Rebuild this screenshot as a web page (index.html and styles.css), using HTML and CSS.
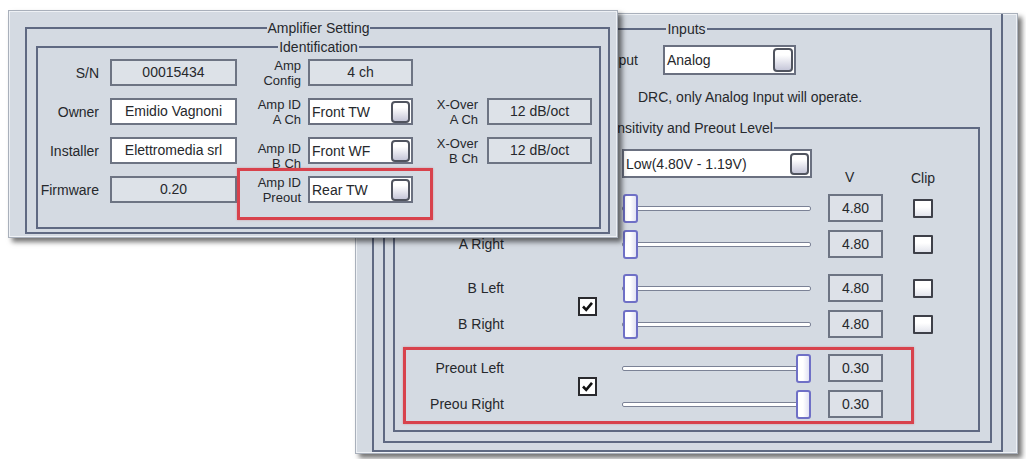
FILE: index.html
```html
<!DOCTYPE html>
<html>
<head>
<meta charset="utf-8">
<link rel="stylesheet" href="styles.css">
</head>
<body>
<div class="desk">

  <section class="win win-right">
    <div class="frame">
      <fieldset class="fs fs-inputs">
        <legend>Inputs</legend>
        <div class="input-row">
          <span class="in-lbl">Input</span>
          <div class="combo combo-analog"><span>Analog</span><i class="btn"></i></div>
        </div>
        <p class="note">DRC, only Analog Input will operate.</p>
        <fieldset class="fs fs-sens">
          <legend>Sensitivity and Preout Level</legend>
          <div class="sgrid head">
            <div class="combo combo-low"><span>Low(4.80V - 1.19V)</span><i class="btn"></i></div>
            <span class="hv">V</span>
            <span class="hclip">Clip</span>
          </div>

          <div class="sgrid group">
            <span class="rl">A Left</span>
            <span class="chk"><svg viewBox="0 0 15 15" width="15" height="15"><path d="M3 7.5 L6.2 10.8 L12 3.8" fill="none" stroke="#111" stroke-width="2.6"/></svg></span>
            <div class="slider"><i class="track"></i><i class="thumb"></i></div>
            <span class="val">4.80</span>
            <span class="clip"></span>
            <span class="rl">A Right</span>
            <div class="slider"><i class="track"></i><i class="thumb"></i></div>
            <span class="val">4.80</span>
            <span class="clip"></span>
          </div>

          <div class="sgrid group">
            <span class="rl">B Left</span>
            <span class="chk"><svg viewBox="0 0 15 15" width="15" height="15"><path d="M3 7.5 L6.2 10.8 L12 3.8" fill="none" stroke="#111" stroke-width="2.6"/></svg></span>
            <div class="slider"><i class="track"></i><i class="thumb"></i></div>
            <span class="val">4.80</span>
            <span class="clip"></span>
            <span class="rl">B Right</span>
            <div class="slider"><i class="track"></i><i class="thumb"></i></div>
            <span class="val">4.80</span>
            <span class="clip"></span>
          </div>

          <div class="sgrid group">
            <span class="rl">Preout Left</span>
            <span class="chk"><svg viewBox="0 0 15 15" width="15" height="15"><path d="M3 7.5 L6.2 10.8 L12 3.8" fill="none" stroke="#111" stroke-width="2.6"/></svg></span>
            <div class="slider"><i class="track"></i><i class="thumb end"></i></div>
            <span class="val">0.30</span>
            <span class="noclip"></span>
            <span class="rl">Preou Right</span>
            <div class="slider"><i class="track"></i><i class="thumb end"></i></div>
            <span class="val">0.30</span>
            <span class="noclip"></span>
          </div>
        </fieldset>
      </fieldset>
    </div>
    <div class="mark mark-right"></div>
  </section>

  <section class="win win-left">
    <fieldset class="fs fs-amp">
      <legend>Amplifier Setting</legend>
      <fieldset class="fs fs-id">
        <legend>Identification</legend>
        <div class="idgrid">
          <span class="l1">S/N</span>
          <span class="field ro">00015434</span>
          <span class="l2">Amp<br>Config</span>
          <span class="field ro">4 ch</span>
          <span></span><span></span>

          <span class="l1">Owner</span>
          <span class="field">Emidio Vagnoni</span>
          <span class="l2">Amp ID<br>A Ch</span>
          <div class="combo"><span>Front TW</span><i class="btn"></i></div>
          <span class="l3">X-Over<br>A Ch</span>
          <span class="field ro">12 dB/oct</span>

          <span class="l1">Installer</span>
          <span class="field">Elettromedia srl</span>
          <span class="l2 down">Amp ID<br>B Ch</span>
          <div class="combo"><span>Front WF</span><i class="btn"></i></div>
          <span class="l3">X-Over<br>B Ch</span>
          <span class="field ro">12 dB/oct</span>

          <span class="l1">Firmware</span>
          <span class="field ro">0.20</span>
          <span class="l2">Amp ID<br>Preout</span>
          <div class="combo"><span>Rear TW</span><i class="btn"></i></div>
          <span></span><span></span>
        </div>
      </fieldset>
    </fieldset>
    <div class="mark mark-left"></div>
  </section>

</div>
</body>
</html>
```

FILE: styles.css
```css
body {
  margin: 0;
  background: #ffffff;
  font-family: "Liberation Sans", Arial, sans-serif;
  font-size: 14px;
  color: #26282c;
}

.desk {
  position: relative;
  width: 1026px;
  height: 459px;
  overflow: hidden;
}

/* windows on the desktop */
.win {
  position: absolute;
  box-sizing: border-box;
  background: #d4dae2;
  border: 1px solid #a9b0bb;
  box-shadow: inset 1px 1px 0 #eef1f5, inset -1px -1px 0 #eef1f5, 4px 4px 5px rgba(0, 0, 0, 0.55);
}

.win-left {
  left: 8px;
  top: 10px;
  width: 610px;
  height: 228px;
  padding: 9px 7px 3px 16px;
  z-index: 2;
}

.win-right {
  left: 355px;
  top: 13px;
  width: 663px;
  height: 441px;
  padding: 0 14px 1px 16px;
  z-index: 1;
}

/* fieldsets */
.fs {
  margin: 0;
  padding: 0;
  border: 2px solid #5f6982;
  min-width: 0;
}

.fs > legend {
  margin: 0 auto;
  padding: 0 1px;
  font-size: 14px;
  line-height: 16px;
}

.fs-amp {
  height: 100%;
  box-sizing: border-box;
  padding: 3px 7px 3px 9px;
}

.fs-id {
  padding: 4px 0 24px 0;
}

.frame {
  height: 100%;
  box-sizing: border-box;
  border: 2px solid #5f6982;
  border-top: none;
  padding: 7px 9px 7px 9px;
}

.fs-inputs {
  height: 100%;
  box-sizing: border-box;
  padding: 8px 10px 9px 8px;
}

.fs-sens {
  margin-top: 15px;
  padding: 13px 0 8px 0;
}

/* left window grid */
.idgrid {
  display: grid;
  grid-template-columns: 72px 127px 71px 105px 74px 105px;
  grid-template-rows: repeat(4, 27px);
  row-gap: 12px;
  align-items: center;
}

.l1 {
  justify-self: end;
  padding-right: 11px;
}

.l2, .l3 {
  justify-self: end;
  text-align: right;
  font-size: 13px;
  line-height: 15px;
  padding-right: 7px;
  white-space: nowrap;
}

.l3 {
  padding-right: 9px;
}

.l2.down {
  margin-top: 10px;
}

.field {
  box-sizing: border-box;
  height: 27px;
  border: 2px solid #6d7483;
  background: #ffffff;
  text-align: center;
  line-height: 23px;
  white-space: nowrap;
}

.field.ro {
  background: #dde2e8;
}

/* combo boxes */
.combo {
  box-sizing: border-box;
  height: 27px;
  display: flex;
  align-items: center;
  justify-content: space-between;
  background: #ffffff;
  border: 2px solid #6a7080;
  padding: 0 1px 0 2px;
  white-space: nowrap;
}

.btn {
  display: block;
  box-sizing: border-box;
  width: 19px;
  height: 22px;
  border: 2px solid #50545f;
  border-radius: 4px;
  background: linear-gradient(#ffffff 25%, #c6c7d9);
}

.combo-analog {
  width: 133px;
  height: 30px;
}

.combo-analog .btn {
  width: 20px;
  height: 24px;
}

.combo-low {
  width: 190px;
  height: 29px;
}

/* inputs area */
.input-row {
  display: flex;
  align-items: center;
}

.in-lbl {
  width: 245px;
  margin-right: 25px;
  text-align: right;
}

.note {
  margin: 14px 0 0 0;
  padding-left: 245px;
  line-height: 16px;
  white-space: nowrap;
}

/* sensitivity grid */
.sgrid {
  display: grid;
  grid-template-columns: 183px 44px 206px 85px 20px;
  align-items: center;
}

.head {
  height: 41px;
  align-items: start;
}

.head .combo-low {
  grid-column: 3;
}

.hv {
  grid-column: 4;
  margin-top: 20px;
  padding-left: 17px;
}

.hclip {
  grid-column: 5;
  justify-self: center;
  margin-top: 21px;
}

.group {
  grid-template-rows: 36px 36px;
  margin-top: 8px;
}

.head + .group {
  margin-top: 0;
}

.rl {
  grid-column: 1;
  justify-self: end;
  padding-right: 74px;
  white-space: nowrap;
}

.chk {
  grid-column: 2;
  grid-row: 1 / span 2;
  box-sizing: border-box;
  width: 19px;
  height: 19px;
  border: 2px solid #2a2a2e;
  background: #ffffff;
  display: flex;
  align-items: center;
  justify-content: center;
}

.slider {
  grid-column: 3;
  position: relative;
  width: 189px;
  height: 29px;
}

.track {
  position: absolute;
  left: 0;
  right: 0;
  top: 12px;
  height: 5px;
  box-sizing: border-box;
  border: 1px solid #7b8296;
  border-radius: 2px;
  background: #ffffff;
}

.thumb {
  position: absolute;
  left: 1px;
  top: 0;
  width: 15px;
  height: 29px;
  box-sizing: border-box;
  border: 2px solid #6f70c6;
  border-radius: 3px;
  background: linear-gradient(90deg, #ffffff 45%, #e2e2f3);
}

.thumb.end {
  left: auto;
  right: 0;
}

.val {
  grid-column: 4;
  box-sizing: border-box;
  width: 55px;
  height: 28px;
  border: 2px solid #6d7483;
  background: #dde1e8;
  text-align: center;
  line-height: 24px;
}

.clip {
  grid-column: 5;
  box-sizing: border-box;
  width: 20px;
  height: 19px;
  border: 2px solid #3e4049;
  border-radius: 1px;
  background: linear-gradient(#ffffff 40%, #e2e4ec);
}

.noclip {
  grid-column: 5;
}

/* red annotation frames */
.mark {
  position: absolute;
  box-sizing: border-box;
  border: 3px solid #d8424c;
  box-shadow: 0 0 2px rgba(200, 40, 50, 0.35);
  z-index: 3;
}

.mark-left {
  left: 228px;
  top: 157px;
  width: 196px;
  height: 52px;
}

.mark-right {
  left: 47px;
  top: 333px;
  width: 511px;
  height: 77px;
}
```
